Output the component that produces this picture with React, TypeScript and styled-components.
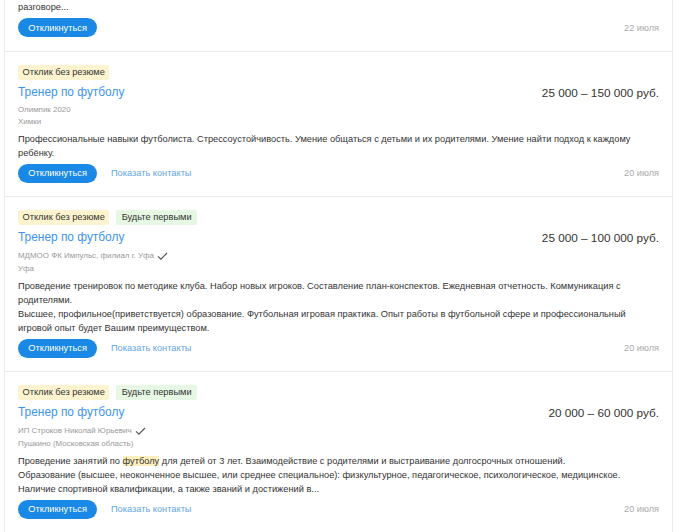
import React from 'react';
import styled, { createGlobalStyle } from 'styled-components';

const GlobalStyle = createGlobalStyle`
  body {
    margin: 0;
    background: #fff;
    font-family: "Liberation Sans", Arial, sans-serif;
    color: #333;
  }
`;

const Panel = styled.div`
  margin-left: 4px;
  width: 667px;
  border-left: 1px solid #ebebeb;
  border-right: 1px solid #ebebeb;
  background: #fff;
`;

const Card = styled.div<{ $first?: boolean }>`
  padding: ${(p) => (p.$first ? '0 13px 13.5px' : '13px 13px 13px')};
  border-bottom: 1px solid #ebebeb;
`;

const Badges = styled.div`
  display: flex;
  gap: 7px;
  height: 15.5px;
`;

const Badge = styled.span<{ $kind: 'yellow' | 'green' }>`
  display: inline-flex;
  align-items: center;
  padding: 0 ${(p) => (p.$kind === 'yellow' ? '4.5px' : '5.3px')};
  height: 15.5px;
  font-size: 9.25px;
  color: #333;
  background: ${(p) => (p.$kind === 'yellow' ? '#fdf3cf' : '#e6f7e3')};
  border-radius: 2px;
`;

const Header = styled.div`
  display: flex;
  justify-content: space-between;
  align-items: center;
  margin-top: 3px;
  height: 18px;
`;

const Title = styled.a`
  font-size: 11.9px;
  color: #3d94f0;
  text-decoration: none;
`;

const Salary = styled.span`
  font-size: 11.75px;
  color: #333;
`;

const Company = styled.div`
  display: flex;
  align-items: center;
  gap: 3px;
  margin-top: 2.5px;
  font-size: 7.95px;
  line-height: 12px;
  color: #999;
`;

const CheckIcon = styled.svg`
  display: block;
`;

const City = styled.div`
  font-size: 7.95px;
  line-height: 12px;
  color: #999;
`;

const Description = styled.div<{ $flush?: boolean }>`
  margin-top: ${(p) => (p.$flush ? '0' : '4px')};
  font-size: 9.25px;
  line-height: 14px;
  color: #333;
`;

const Line = styled.div`
  white-space: nowrap;
`;

const Mark = styled.span`
  background: #fdf0bd;
`;

const Actions = styled.div`
  display: flex;
  align-items: center;
  margin-top: 4px;
`;

const RespondButton = styled.button`
  height: 19px;
  padding: 0 10.3px;
  border: none;
  border-radius: 10px;
  background: #1a88e5;
  color: #fff;
  font-family: inherit;
  font-size: 9.25px;
  cursor: pointer;
`;

const ContactsLink = styled.a`
  margin-left: 13.7px;
  font-size: 9.25px;
  color: #64a5e8;
  text-decoration: none;
`;

const DateLabel = styled.span`
  margin-left: auto;
  font-size: 9.2px;
  color: #aaa;
`;

type Vacancy = {
  badges: { text: string; kind: 'yellow' | 'green' }[];
  title: string;
  salary: string;
  company: string;
  verified?: boolean;
  city: string;
  lines: React.ReactNode[];
  date: string;
};

const vacancies: Vacancy[] = [
  {
    badges: [{ text: 'Отклик без резюме', kind: 'yellow' }],
    title: 'Тренер по футболу',
    salary: '25 000 – 150 000 руб.',
    company: 'Олимпик 2020',
    city: 'Химки',
    lines: [
      'Профессиональные навыки футболиста. Стрессоустойчивость. Умение общаться с детьми и их родителями. Умение найти подход к каждому',
      'ребёнку.',
    ],
    date: '20 июля',
  },
  {
    badges: [
      { text: 'Отклик без резюме', kind: 'yellow' },
      { text: 'Будьте первыми', kind: 'green' },
    ],
    title: 'Тренер по футболу',
    salary: '25 000 – 100 000 руб.',
    company: 'МДМОО ФК Импульс, филиал г. Уфа',
    verified: true,
    city: 'Уфа',
    lines: [
      'Проведение тренировок по методике клуба. Набор новых игроков. Составление план-конспектов. Ежедневная отчетность. Коммуникация с',
      'родителями.',
      'Высшее, профильное(приветствуется) образование. Футбольная игровая практика. Опыт работы в футбольной сфере и профессиональный',
      'игровой опыт будет Вашим преимуществом.',
    ],
    date: '20 июля',
  },
  {
    badges: [
      { text: 'Отклик без резюме', kind: 'yellow' },
      { text: 'Будьте первыми', kind: 'green' },
    ],
    title: 'Тренер по футболу',
    salary: '20 000 – 60 000 руб.',
    company: 'ИП Строков Николай Юрьевич',
    verified: true,
    city: 'Пушкино (Московская область)',
    lines: [
      <>
        Проведение занятий по <Mark>футболу</Mark> для детей от 3 лет. Взаимодействие с родителями и выстраивание долгосрочных отношений.
      </>,
      'Образование (высшее, неоконченное высшее, или среднее специальное): физкультурное, педагогическое, психологическое, медицинское.',
      'Наличие спортивной квалификации, а также званий и достижений в...',
    ],
    date: '20 июля',
  },
];

// the check makes the company line a bit taller, as on the original page
const Check = () => (
  <CheckIcon viewBox="0 0 11 14" width="11" height="14">
    <path d="M1 7.4 L3.9 10.2 L10 4" fill="none" stroke="#555" strokeWidth="1.2" />
  </CheckIcon>
);

export default function App() {
  return (
    <>
      <GlobalStyle />
      <Panel>
        <Card $first>
          <Description $flush>
            <Line>разговоре...</Line>
          </Description>
          <Actions>
            <RespondButton>Откликнуться</RespondButton>
            <DateLabel>22 июля</DateLabel>
          </Actions>
        </Card>
        {vacancies.map((v, i) => (
          <Card key={i}>
            <Badges>
              {v.badges.map((b) => (
                <Badge key={b.text} $kind={b.kind}>
                  {b.text}
                </Badge>
              ))}
            </Badges>
            <Header>
              <Title href="#">{v.title}</Title>
              <Salary>{v.salary}</Salary>
            </Header>
            <Company>
              {v.company}
              {v.verified && <Check />}
            </Company>
            <City>{v.city}</City>
            <Description>
              {v.lines.map((l, j) => (
                <Line key={j}>{l}</Line>
              ))}
            </Description>
            <Actions>
              <RespondButton>Откликнуться</RespondButton>
              <ContactsLink href="#">Показать контакты</ContactsLink>
              <DateLabel>{v.date}</DateLabel>
            </Actions>
          </Card>
        ))}
      </Panel>
    </>
  );
}
